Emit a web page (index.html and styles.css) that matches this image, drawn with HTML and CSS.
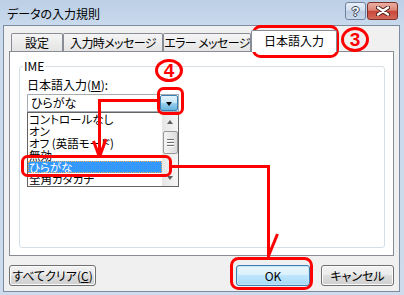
FILE: index.html
```html
<!DOCTYPE html>
<html lang="ja">
<head>
<meta charset="utf-8">
<title>データの入力規則</title>
<link rel="stylesheet" href="styles.css">
</head>
<body>
<div class="window">
  <div class="titlebar">
    <span class="title">データの入力規則</span>
    <div class="caption">
      <span class="cap-btn help">?</span>
      <span class="cap-btn close">
        <svg width="14" height="10" viewBox="0 0 14 10">
          <path d="M2 1.5 L12 8.5 M12 1.5 L2 8.5" stroke="#4a1a14" stroke-width="4.2" stroke-linecap="round"/>
          <path d="M2 1.5 L12 8.5 M12 1.5 L2 8.5" stroke="#ffffff" stroke-width="2.4" stroke-linecap="round"/>
        </svg>
      </span>
    </div>
  </div>
  <div class="client">
    <div class="tabs">
      <div class="tab t1">設定</div>
      <div class="tab t2">入力時メッセージ</div>
      <div class="tab t3">エラー メッセージ</div>
      <div class="tab active">日本語入力</div>
    </div>
    <div class="panel">
      <div class="group">
        <div class="group-title">IME</div>
        <div class="field-label">日本語入力(<u>M</u>):</div>
        <div class="combo">
          <span class="combo-text">ひらがな</span>
          <span class="combo-btn"><span class="tri-down"></span></span>
        </div>
        <div class="listbox">
          <ul class="items">
            <li>コントロールなし</li>
            <li>オン</li>
            <li>オフ (英語モード)</li>
            <li>無効</li>
            <li class="sel">ひらがな</li>
            <li>全角カタカナ</li>
          </ul>
          <div class="scrollbar">
            <span class="sb-btn"><span class="sb-up"></span></span>
            <span class="thumb"><i></i><i></i><i></i></span>
            <span class="sb-btn sb-bottom"><span class="sb-down"></span></span>
          </div>
        </div>
      </div>
    </div>
    <div class="footer">
      <button class="btn clear">すべてクリア(<u>C</u>)</button>
      <span class="spacer"></span>
      <button class="btn ok">OK</button>
      <button class="btn cancel">キャンセル</button>
    </div>
  </div>

  <svg class="annot" width="404" height="295" viewBox="0 0 404 295">
    <g fill="none" stroke="#ff0000" stroke-width="3">
      <rect x="253.5" y="26.5" width="84" height="30" rx="7"/>
      <rect x="158.5" y="88.5" width="24" height="25" rx="5"/>
      <rect x="22.5" y="156.5" width="148" height="19" rx="5"/>
      <rect x="231.5" y="258.5" width="80" height="30" rx="7"/>
      <path d="M157 100.5 H99.5 V157"/>
      <path d="M93.5 141 L99.5 157 M106 139 L99.5 157"/>
      <path d="M172 166.5 H268.5 V257"/>
      <path d="M277.5 234 L268.5 256"/>
    </g>
  </svg>
  <span class="badge b3">3</span>
  <span class="badge b4">4</span>
</div>
</body>
</html>
```

FILE: styles.css
```css
* { box-sizing: border-box; }
html, body { margin: 0; padding: 0; }
body {
  width: 404px;
  height: 295px;
  overflow: hidden;
  font-family: "Noto Sans CJK JP", "Noto Sans", sans-serif;
  font-size: 12px;
  font-feature-settings: "palt";
  color: #000;
}
u { text-decoration: underline; text-underline-offset: 1px; }

.window {
  position: relative;
  width: 404px;
  height: 295px;
  display: flex;
  flex-direction: column;
  background: linear-gradient(to bottom, #bccfe6 0, #cadaed 26px, #cddbec 100%);
}

/* title bar */
.titlebar {
  flex: none;
  height: 25px;
  display: flex;
  align-items: flex-start;
  padding-left: 7px;
}
.title {
  margin-top: 6px;
  line-height: 15px;
  font-size: 12px;
  color: #000;
}
.caption {
  margin-left: auto;
  margin-right: 6px;
  margin-top: 2px;
  display: flex;
  gap: 1px;
}
.cap-btn {
  height: 18px;
  border-radius: 3px;
  display: flex;
  align-items: center;
  justify-content: center;
}
.help {
  width: 21px;
  border: 1px solid #6f83a0;
  background: linear-gradient(to bottom, #e8eff8 0%, #d3e0ef 45%, #bccde3 50%, #c9d9ec 100%);
  color: #fff;
  font-family: "Liberation Sans", sans-serif;
  font-weight: bold;
  font-size: 13px;
  line-height: 13px;
  text-shadow: 1px 0 #34445a, -1px 0 #34445a, 0 1px #34445a, 0 -1px #34445a;
}
.close {
  width: 31px;
  border: 1px solid #7e2f28;
  background: linear-gradient(to bottom, #eab0a3 0%, #dc8676 45%, #c8473a 52%, #d46a5a 100%);
}

/* client area */
.client {
  flex: none;
  height: 267px;
  margin: 0 4px 0 3px;
  border: 1px solid #7c8ba0;
  background: #f0f0f0;
  padding: 4px 5px 0;
  display: flex;
  flex-direction: column;
}

.tabs {
  flex: none;
  display: flex;
  align-items: flex-end;
  height: 22px;
  margin-bottom: -1px;
  padding-left: 2px;
  position: relative;
  z-index: 1;
}
.tab {
  height: 18px;
  margin-bottom: 1px;
  border: 1px solid #898c95;
  border-bottom: 0;
  border-radius: 2px 2px 0 0;
  background: linear-gradient(to bottom, #f5f5f5, #e4e4e4);
  display: flex;
  align-items: center;
  justify-content: center;
  line-height: 14px;
  white-space: nowrap;
  letter-spacing: -0.6px;
  overflow: hidden;
}
.t1 { width: 52px; letter-spacing: 0; }
.t2 { width: 100px; }
.t3 { width: 88px; }
.tab.active {
  width: 86px;
  height: 22px;
  margin-bottom: 0;
  padding-bottom: 1px;
  background: #fff;
  letter-spacing: 0;
}

.panel {
  flex: none;
  height: 205px;
  border: 1px solid #898c95;
  background: #fff;
  padding-top: 14px;
}

.group {
  height: 182px;
  margin: 0 8px 0 9px;
  border: 1px solid #d5dfe5;
  border-radius: 3px;
}
.group-title {
  width: fit-content;
  margin: -8px 0 0 3px;
  padding: 0 1px;
  background: #fff;
  line-height: 14px;
}
.field-label {
  margin: 5px 0 0 7px;
  line-height: 14px;
}

.combo {
  width: 152px;
  height: 18px;
  margin: 2px 0 0 7px;
  border: 1px solid #a7abb3;
  display: flex;
  align-items: center;
}
.combo-text {
  padding-left: 3px;
  line-height: 14px;
}
.combo-btn {
  margin-left: auto;
  width: 18px;
  height: 16px;
  border: 1px solid #3c7fb1;
  border-radius: 2px;
  background: linear-gradient(to bottom, #e5f4fc 0%, #c4e5f6 50%, #98d1ef 50%, #68b3db 100%);
  display: flex;
  align-items: center;
  justify-content: center;
}
.tri-down {
  width: 0;
  height: 0;
  border-left: 3.5px solid transparent;
  border-right: 3.5px solid transparent;
  border-top: 4px solid #000;
  margin-top: 1px;
}

.listbox {
  width: 152px;
  height: 75px;
  margin-left: 7px;
  border: 1px solid #646464;
  display: flex;
  overflow: hidden;
  background: #fff;
}
.items {
  list-style: none;
  margin: 0;
  padding: 0;
  width: 134px;
  flex: none;
}
.items li {
  height: 12px;
  line-height: 12px;
  font-size: 11.5px;
  padding-left: 1px;
  white-space: nowrap;
}
.items li.sel {
  background: #3399ff;
  color: #fff;
  outline: 1px dotted #f0b060;
  outline-offset: -1px;
}

.scrollbar {
  width: 16px;
  flex: none;
  display: flex;
  flex-direction: column;
  align-items: center;
  background: linear-gradient(to right, #e6e6e6, #f5f5f5);
}
.sb-btn {
  width: 16px;
  height: 17px;
  flex: none;
  display: flex;
  align-items: center;
  justify-content: center;
}
.sb-bottom { margin-top: auto; }
.sb-up {
  width: 0;
  height: 0;
  border-left: 3.5px solid transparent;
  border-right: 3.5px solid transparent;
  border-bottom: 4px solid #606060;
}
.sb-down {
  width: 0;
  height: 0;
  border-left: 3.5px solid transparent;
  border-right: 3.5px solid transparent;
  border-top: 4px solid #606060;
}
.thumb {
  margin-top: 1px;
  width: 15px;
  height: 23px;
  flex: none;
  border: 1px solid #979797;
  border-radius: 2px;
  background: linear-gradient(to right, #f4f4f4, #dcdcdc);
  display: flex;
  flex-direction: column;
  align-items: center;
  justify-content: center;
  gap: 1px;
}
.thumb i {
  display: block;
  width: 7px;
  height: 1px;
  background: #6f6f6f;
  box-shadow: 0 1px #fff;
  margin-bottom: 1px;
}

/* footer */
.footer {
  flex: none;
  display: flex;
  align-items: center;
  margin-top: 9px;
  height: 21px;
}
.spacer { flex: 1; }
.btn {
  height: 21px;
  padding: 0;
  font-family: inherit;
  font-size: 12px;
  font-feature-settings: "palt";
  line-height: 14px;
  color: #000;
  border: 1px solid #707070;
  border-radius: 3px;
  background: linear-gradient(to bottom, #f2f2f2 0%, #ebebeb 50%, #dddddd 50%, #cfcfcf 100%);
  box-shadow: inset 0 0 0 1px #fbfbfb;
}
.clear { width: 87px; }
.ok {
  width: 74px;
  border-color: #3c7fb1;
  background: linear-gradient(to bottom, #eaf6fd 0%, #d9f0fc 50%, #bee6fd 50%, #a7d9f5 100%);
  box-shadow: inset 0 0 0 1px #c4e6f8;
}
.cancel { width: 73px; margin-left: 11px; }

/* annotations */
.annot {
  position: absolute;
  left: 0;
  top: 0;
  pointer-events: none;
}
.badge {
  position: absolute;
  border: 3px solid #ff0000;
  border-radius: 50%;
  color: #ff0000;
  font-family: "Liberation Sans", sans-serif;
  font-weight: bold;
  font-size: 19px;
  line-height: 1;
  display: flex;
  align-items: center;
  justify-content: center;
}
.b3 { left: 341px; top: 27px; width: 28px; height: 25px; }
.b4 { left: 155px; top: 59px; width: 28px; height: 23px; }
```
